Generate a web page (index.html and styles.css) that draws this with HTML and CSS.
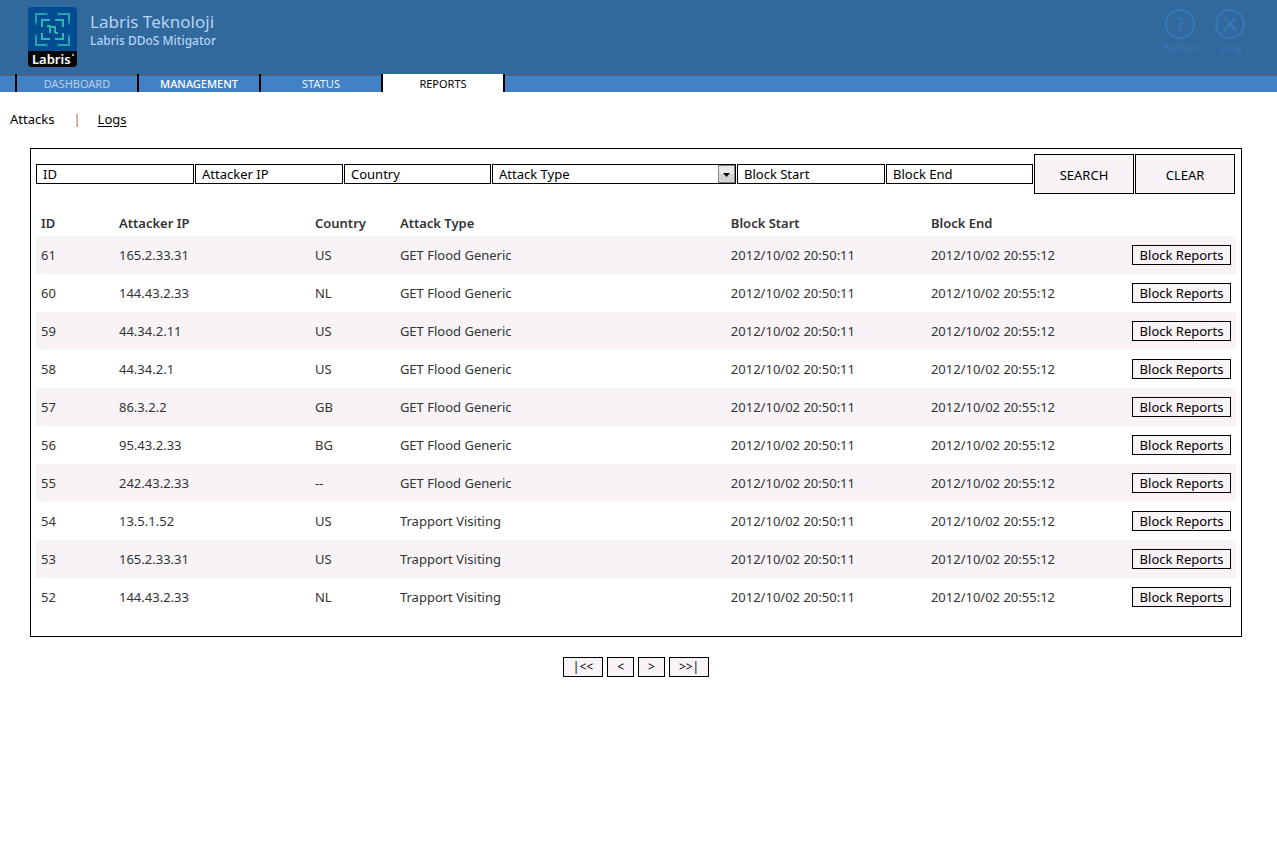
FILE: index.html
```html
<!DOCTYPE html>
<html lang="en">
<head>
<meta charset="utf-8">
<title>Labris DDoS Mitigator</title>
<link rel="stylesheet" href="styles.css">
</head>
<body>
<header class="header">
  <svg class="logo" viewBox="0 0 49 60" role="img" aria-label="Labris">
    <rect width="49" height="60" rx="4" fill="#004c91"/>
    <path d="M0 44h49v12a4 4 0 0 1-4 4H4a4 4 0 0 1-4-4z" fill="#050608"/>
    <g fill="none" stroke-width="2">
      <path d="M8 16V7h11M30 7h11v9M8 29v9h11M30 38h11v-9" stroke="#23a3ac"/>
      <path d="M14 20v-7h8M27 13h8v7M14 26v6h8M27 32h8v-6" stroke="#2bb8b4"/>
      <path d="M6 17h4M39 17h4M6 28h4M39 28h4M19 5v4M30 5v4M19 36v4M30 36v4" stroke="#167da6" stroke-width="1"/>
      <path d="M19 19h3v7M22 20h5v6M27 26h3" stroke="#2bb8b4"/>
    </g>
    <text x="4" y="57" class="logo-text">Labris</text>
    <circle cx="45" cy="48" r="1" fill="#ddd"/>
  </svg>
  <div class="brand">
    <h1 class="brand-title">Labris Teknoloji</h1>
    <p class="brand-sub">Labris DDoS Mitigator</p>
  </div>
  <div class="actions">
    <button class="action" type="button">
      <svg class="action-icon" viewBox="0 0 32 32" aria-hidden="true"><circle cx="16" cy="16" r="14"/><path d="M13 11q3-2 5 0c2 4-2 4-2 8M16 21v3"/></svg>
      <span>Yardım</span>
    </button>
    <button class="action" type="button">
      <svg class="action-icon" viewBox="0 0 32 32" aria-hidden="true"><circle cx="16" cy="16" r="14"/><path d="M11 10l11 13M21 10L10 23"/></svg>
      <span>Çıkış</span>
    </button>
  </div>
</header>
<nav class="tabs">
  <a class="tab tab-dim" href="#">DASHBOARD</a>
  <a class="tab tab-strong" href="#">MANAGEMENT</a>
  <a class="tab" href="#">STATUS</a>
  <a class="tab tab-active" href="#">REPORTS</a>
</nav>
<nav class="subnav">
  <a class="sublink" href="#">Attacks</a>
  <span class="divider">|</span>
  <a class="sublink sublink-active" href="#">Logs</a>
</nav>
<main class="main">
  <section class="panel">
    <form class="filters">
      <input class="field" type="text" aria-label="ID" value="ID">
      <input class="field" type="text" aria-label="Attacker IP" value="Attacker IP">
      <input class="field" type="text" aria-label="Country" value="Country">
      <div class="select-wrap">
        <select class="field select" aria-label="Attack Type"><option>Attack Type</option></select>
        <svg class="select-arrow" viewBox="0 0 17 18" aria-hidden="true"><path d="M0 0h17v18H0z" fill="#858585"/><path d="M1 1h15v16H1z" fill="#e9e9e9"/><path d="M1 9h15v8H1z" fill="#d4d4d4"/><path d="M5 8h7l-3.500 4z" fill="#000"/></svg>
      </div>
      <input class="field" type="text" aria-label="Block Start" value="Block Start">
      <input class="field" type="text" aria-label="Block End" value="Block End">
      <button class="btn btn-large" type="button">SEARCH</button>
      <button class="btn btn-large" type="button">CLEAR</button>
    </form>
    <table class="logs">
      <colgroup><col class="col-id"><col class="col-ip"><col class="col-country"><col class="col-type"><col class="col-date"><col class="col-date"><col></colgroup>
      <thead>
        <tr><th>ID</th><th>Attacker IP</th><th>Country</th><th>Attack Type</th><th>Block Start</th><th>Block End</th><td></td></tr>
      </thead>
      <tbody>
        <tr><td>61</td><td>165.2.33.31</td><td>US</td><td>GET Flood Generic</td><td>2012/10/02 20:50:11</td><td>2012/10/02 20:55:12</td><td class="cell-action"><button class="btn" type="button">Block Reports</button></td></tr>
        <tr><td>60</td><td>144.43.2.33</td><td>NL</td><td>GET Flood Generic</td><td>2012/10/02 20:50:11</td><td>2012/10/02 20:55:12</td><td class="cell-action"><button class="btn" type="button">Block Reports</button></td></tr>
        <tr><td>59</td><td>44.34.2.11</td><td>US</td><td>GET Flood Generic</td><td>2012/10/02 20:50:11</td><td>2012/10/02 20:55:12</td><td class="cell-action"><button class="btn" type="button">Block Reports</button></td></tr>
        <tr><td>58</td><td>44.34.2.1</td><td>US</td><td>GET Flood Generic</td><td>2012/10/02 20:50:11</td><td>2012/10/02 20:55:12</td><td class="cell-action"><button class="btn" type="button">Block Reports</button></td></tr>
        <tr><td>57</td><td>86.3.2.2</td><td>GB</td><td>GET Flood Generic</td><td>2012/10/02 20:50:11</td><td>2012/10/02 20:55:12</td><td class="cell-action"><button class="btn" type="button">Block Reports</button></td></tr>
        <tr><td>56</td><td>95.43.2.33</td><td>BG</td><td>GET Flood Generic</td><td>2012/10/02 20:50:11</td><td>2012/10/02 20:55:12</td><td class="cell-action"><button class="btn" type="button">Block Reports</button></td></tr>
        <tr><td>55</td><td>242.43.2.33</td><td>--</td><td>GET Flood Generic</td><td>2012/10/02 20:50:11</td><td>2012/10/02 20:55:12</td><td class="cell-action"><button class="btn" type="button">Block Reports</button></td></tr>
        <tr><td>54</td><td>13.5.1.52</td><td>US</td><td>Trapport Visiting</td><td>2012/10/02 20:50:11</td><td>2012/10/02 20:55:12</td><td class="cell-action"><button class="btn" type="button">Block Reports</button></td></tr>
        <tr><td>53</td><td>165.2.33.31</td><td>US</td><td>Trapport Visiting</td><td>2012/10/02 20:50:11</td><td>2012/10/02 20:55:12</td><td class="cell-action"><button class="btn" type="button">Block Reports</button></td></tr>
        <tr><td>52</td><td>144.43.2.33</td><td>NL</td><td>Trapport Visiting</td><td>2012/10/02 20:50:11</td><td>2012/10/02 20:55:12</td><td class="cell-action"><button class="btn" type="button">Block Reports</button></td></tr>
      </tbody>
    </table>
  </section>
  <div class="pager">
    <button class="btn btn-pager" type="button">|&lt;&lt;</button>
    <button class="btn btn-pager" type="button">&lt;</button>
    <button class="btn btn-pager" type="button">&gt;</button>
    <button class="btn btn-pager" type="button">&gt;&gt;|</button>
  </div>
</main>
</body>
</html>
```
FILE: styles.css
```css
* { box-sizing: border-box; }
body {
  margin: 0;
  background: #fff;
  color: #333;
  font-family: "Trebuchet MS", "Noto Sans", sans-serif;
  font-size: 13px;
  line-height: 18px;
}
button, input, select { font: inherit; }
a { color: inherit; text-decoration: none; }

.header {
  display: flex;
  align-items: flex-start;
  height: 74px;
  padding: 7px 22px 0 28px;
  background: #31699c;
}
.logo { width: 49px; height: 60px; }
.logo-text { fill: #fff; font: 600 13px "Noto Sans", sans-serif; }
.brand { flex: 1; margin-left: 13px; color: #b5d3f5; }
.brand-title { margin: 4px 0 0; font-size: 17px; font-weight: 400; line-height: 22px; }
.brand-sub { margin: 0; font-size: 12px; line-height: 16px; font-weight: 500; }
.actions { display: flex; }
.action {
  display: flex;
  flex-direction: column;
  align-items: center;
  width: 50px;
  padding: 0;
  border: 0;
  background: none;
  color: #3674b3;
  font-size: 10px;
  font-weight: 600;
  line-height: 16px;
}
.action-icon { width: 32px; height: 32px; margin-top: 1px; fill: none; stroke: #3878b8; stroke-width: 2; }

.tabs {
  display: flex;
  height: 18px;
  padding-left: 15px;
  background: linear-gradient(#4a6388 2px, #4182c7 2px);
}
.tab {
  width: 122px;
  border-left: 2px solid #000;
  color: #e8f2ff;
  font-size: 11px;
  line-height: 19px;
  text-align: center;
}
.tab-dim { color: #b8cfe8; }
.tab-strong { color: #fff; font-weight: 500; }
.tab-active { width: 124px; border-right: 2px solid #000; background: #fff; color: #000; }

.subnav { display: flex; padding: 18px 10px 0; color: #000; }
.divider { margin: 0 17px 0 19px; color: #b26a1e; }
.sublink-active { text-decoration: underline; text-underline-offset: 2px; }

.main { padding: 20px 35px 0 30px; }
.panel { padding: 5px 5px 20px; border: 1px solid #000; }
.filters {
  display: grid;
  grid-template-columns: 158fr 148fr 147fr 244fr 148fr 147fr 100px 100px;
  gap: 1px;
  align-items: center;
  padding-right: 1px;
}
.field {
  display: block;
  width: 100%;
  min-width: 0;
  height: 20px;
  padding: 0 6px;
  border: 1px solid #000;
  border-radius: 0;
  background: #fff;
  color: #000;
  line-height: 18px;
}
.select-wrap { position: relative; }
.select { appearance: none; }
.select-arrow { position: absolute; top: 1px; right: 1px; width: 17px; height: 18px; pointer-events: none; }
.btn {
  height: 20px;
  padding: 0 9px;
  border: 1px solid #000;
  border-radius: 0;
  background: #f7f3f7;
  color: #000;
  line-height: 18px;
}
.btn-large { height: 40px; padding-top: 2px; }

.logs { width: 100%; margin-top: 16px; border-collapse: collapse; table-layout: fixed; }
.logs th, .logs td { padding: 0 5px; text-align: left; }
.logs th { height: 26px; font-weight: 600; }
.logs tbody td { height: 38px; }
.logs tbody tr:nth-child(odd) { background: #f7f3f7; }
.logs .cell-action { text-align: right; }
.cell-action .btn { width: 99px; padding: 0; }
.col-id { width: 6.5%; }
.col-ip { width: 16.33%; }
.col-country { width: 7.08%; }
.col-type { width: 27.58%; }
.col-date { width: 16.67%; }

.pager { display: flex; justify-content: center; gap: 4px; padding-top: 20px; }
.btn-pager { font-size: 12px; }
```
